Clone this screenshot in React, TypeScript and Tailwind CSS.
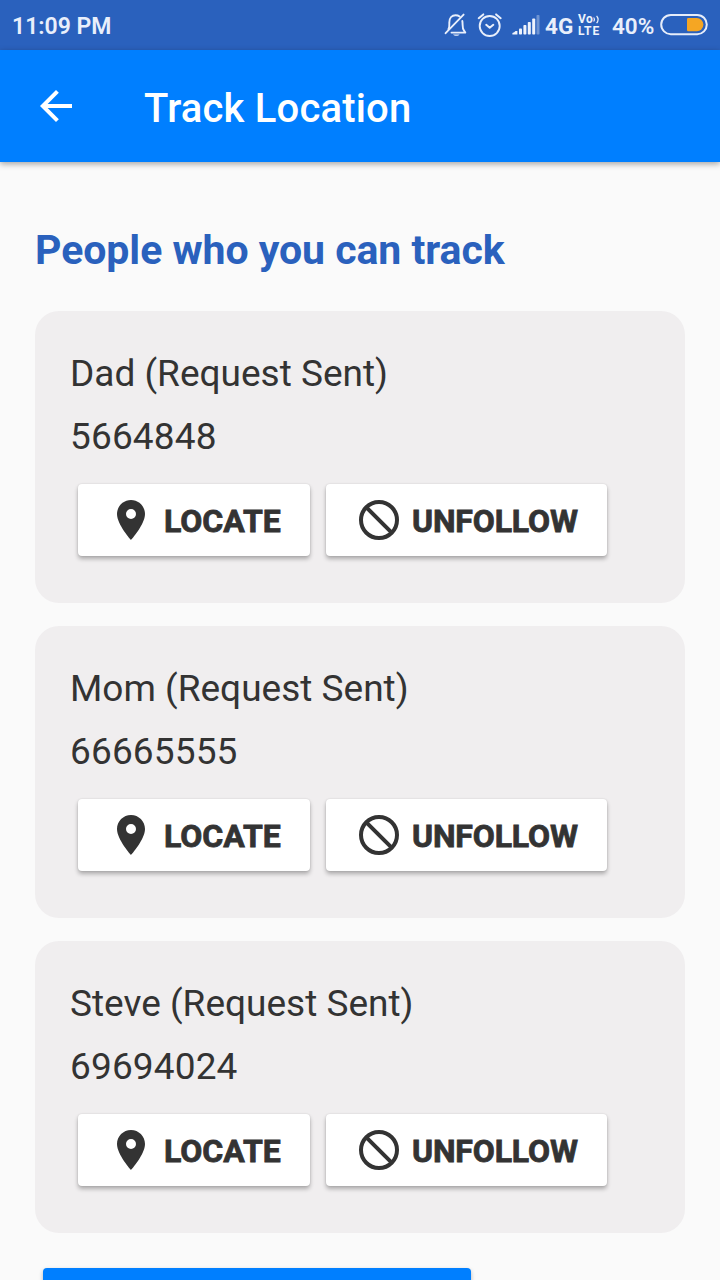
const people = [
  { name: "Dad (Request Sent)", phone: "5664848" },
  { name: "Mom (Request Sent)", phone: "66665555" },
  { name: "Steve (Request Sent)", phone: "69694024" },
];

function BellOff() {
  return (
    <svg className="mt-3 h-[26px] w-6 shrink-0" viewBox="0 0 24 26" fill="none" stroke="#e9effb" strokeWidth="1.9" strokeLinecap="round" strokeLinejoin="round">
      <path d="M4.4 17C5.7 15.5 5.3 13 5.3 10.5C5.3 6 8 3.2 11.5 3.2C13.2 3.2 14.5 3.6 15.6 4.4" />
      <path d="M18.3 9C19 12 18 16 19.8 18.2L21.3 20.6H7.5" />
      <path d="M1.6 21.2L19.6 2.6" />
      <path d="M9 22.4H15.6C14.6 24.2 10.2 24.2 9 22.4Z" fill="#e9effb" stroke="none" />
    </svg>
  );
}

function Alarm() {
  return (
    <svg className="mt-3 ml-[9px] h-[26px] w-[26px] shrink-0" viewBox="0 0 26 26" fill="none" stroke="#e9effb" strokeWidth="1.9" strokeLinecap="round" strokeLinejoin="round">
      <circle cx="12.7" cy="14" r="10" />
      <path d="M9.2 12.8L12.7 15.8L16.3 12.8" strokeWidth="2" />
      <path d="M1.7 6.2L6.3 2.4M23.7 6.2L19.1 2.4" strokeWidth="2" />
    </svg>
  );
}

function Signal() {
  return (
    <svg className="mt-[14px] ml-[9px] h-[21px] w-7 shrink-0" viewBox="0 0 28 21" fill="#eef3fc">
      <path d="M0.4 20.6V19Q2.4 18.5 3.5 17H5.4V20.6Z" />
      <rect x="7" y="14.5" width="3" height="6.1" rx="0.8" />
      <rect x="11.4" y="11" width="3" height="9.6" rx="0.8" />
      <rect x="15.8" y="8" width="3" height="12.6" rx="0.8" />
      <rect x="20.2" y="4.5" width="3" height="16.1" rx="0.8" />
      <rect x="24.5" y="1" width="3" height="19.6" rx="0.8" opacity="0.35" />
    </svg>
  );
}

function Battery() {
  return (
    <svg className="mt-[13px] h-6 w-12 shrink-0" viewBox="0 0 48 24" fill="none">
      <rect x="1.2" y="2" width="45.6" height="19.2" rx="9.6" stroke="#e6edfa" strokeWidth="2" />
      <path d="M28.3 5H36.8A6.6 6.6 0 0 1 36.8 18.2H28.3Q27 18.2 27 16.9V6.3Q27 5 28.3 5Z" fill="#f5a623" />
    </svg>
  );
}

function Volte() {
  return (
    <div className="mt-[13px] w-[24px] shrink-0 font-bold text-[#eef3fc]">
      <div className="flex h-3 items-center text-[12px] leading-[12px]">
        <span className="tracking-[0.5px]">Vo</span>
        <svg className="h-[9px] w-[7px]" viewBox="0 0 7 9" fill="none" stroke="#eef3fc" strokeWidth="1.2">
          <path d="M0.6 2.5Q2.2 4.5 0.6 6.5M3.6 0.8Q6.6 4.5 3.6 8.2" />
        </svg>
      </div>
      <div className="h-[12px] text-[12px] leading-[12px] tracking-[0.9px]">LTE</div>
    </div>
  );
}

function StatusBar() {
  return (
    <div className="flex h-[50px] shrink-0 items-start bg-[#2a61bd] text-[#e9effb]">
      <span className="mt-3 ml-[12px] w-[432px] text-[23px] leading-[30px] font-semibold">11:09 PM</span>
      <BellOff />
      <Alarm />
      <Signal />
      <span className="mt-[11px] ml-[5px] w-[33px] text-[22.5px] leading-[30px] font-bold">4G</span>
      <Volte />
      <span className="mt-[11px] ml-[10px] w-12 text-[22.5px] leading-[30px] font-semibold">40%</span>
      <Battery />
    </div>
  );
}

function PersonCard({ name, phone }: { name: string; phone: string }) {
  return (
    <section className="h-[292px] rounded-[24px] bg-[#f0eeef] pt-[31px] pl-[35px] text-[#333333]">
      <p className="h-[63px] text-[37px] leading-[63px]">{name}</p>
      <p className="h-[63px] text-[37px] leading-[63px] tracking-[0.15px]">{phone}</p>
      <div className="mt-4 ml-2 flex gap-4">
        <button className="flex h-[72px] w-[232px] items-center rounded-[4px] bg-white pl-[29px] shadow-[0_3px_4px_rgba(0,0,0,0.28),0_0_2px_rgba(0,0,0,0.12)]">
          <svg className="h-12 w-12" viewBox="0 0 24 24" fill="currentColor">
            <path d="M12 2C8.13 2 5 5.13 5 9c0 5.25 7 13 7 13s7-7.75 7-13c0-3.87-3.13-7-7-7zm0 9.5a2.5 2.5 0 0 1 0-5 2.5 2.5 0 0 1 0 5z" />
          </svg>
          <span className="mt-px ml-[9px] text-[32px] leading-[38px] font-bold [-webkit-text-stroke:0.8px_#333333]">LOCATE</span>
        </button>
        <button className="flex h-[72px] w-[281px] items-center rounded-[4px] bg-white pl-[29px] shadow-[0_3px_4px_rgba(0,0,0,0.28),0_0_2px_rgba(0,0,0,0.12)]">
          <svg className="h-12 w-12" viewBox="0 0 24 24" fill="none" stroke="currentColor" strokeWidth="2">
            <circle cx="12" cy="12" r="9" />
            <path d="M5.8 5.8L18.2 18.2" />
          </svg>
          <span className="mt-px ml-[9px] text-[32px] leading-[38px] font-bold tracking-[-0.15px] [-webkit-text-stroke:0.8px_#333333]">UNFOLLOW</span>
        </button>
      </div>
    </section>
  );
}

export default function App() {
  return (
    <div className="flex h-[1280px] w-[720px] flex-col overflow-hidden bg-[#fafafa] font-['Roboto',sans-serif]">
      <StatusBar />
      <header className="flex h-28 shrink-0 bg-[#007fff] text-white shadow-[0_2px_6px_rgba(0,0,0,0.35)]">
        <svg className="mt-8 ml-8 h-12 w-12" viewBox="0 0 24 24" fill="currentColor">
          <path d="M20 11H7.83l5.59-5.59L12 4l-8 8 8 8 1.41-1.41L7.83 13H20v-2z" />
        </svg>
        <h1 className="mt-[35px] ml-16 text-[40px] leading-[48px] font-medium tracking-[0.18px]">Track Location</h1>
      </header>
      <main className="px-[35px] pt-[62px]">
        <h2 className="h-[87px] text-[41px] leading-[53px] font-bold tracking-[-0.04px] text-[#2a61bd]">People who you can track</h2>
        <div className="flex flex-col gap-[23px]">
          {people.map((p) => (
            <PersonCard key={p.name} name={p.name} phone={p.phone} />
          ))}
        </div>
        <button className="mt-[35px] ml-2 block h-[72px] w-[428px] rounded-[4px] bg-[#007fff] shadow-[0_2px_4px_rgba(0,0,0,0.28)]" />
      </main>
    </div>
  );
}
